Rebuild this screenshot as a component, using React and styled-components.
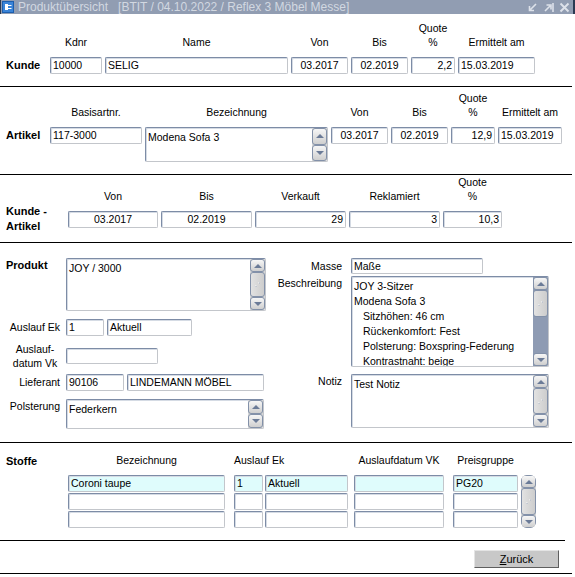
import React from 'react';
import styled, { createGlobalStyle } from 'styled-components';

const GlobalStyle = createGlobalStyle`
  html, body {
    margin: 0;
    padding: 0;
    background: #fff;
  }
  body {
    font-family: "Liberation Sans", Arial, sans-serif;
    color: #000;
  }
`;

const Window = styled.div`
  width: 575px;
  height: 577px;
  overflow: hidden;
  display: flex;
  flex-direction: column;
  background: #fff;
`;

const TitleBar = styled.div`
  flex: none;
  height: 14px;
  box-sizing: border-box;
  display: flex;
  align-items: center;
  background: #919db2;
  border-left: 1px solid #2c3a52;
  border-right: 2px solid #2c3a52;
  padding: 0 3px 0 1px;
`;

const TitleText = styled.div`
  flex: 1;
  margin-left: 4px;
  color: #d2d8e1;
  font-size: 12px;
  line-height: 14px;
  white-space: pre;
`;

const WinButtons = styled.div`
  display: flex;
  gap: 5px;
  align-items: center;
`;

const Section = styled.section`
  flex: none;
  box-sizing: border-box;
  width: ${p => p.$line || 572}px;
  padding: ${p => p.$pad};
  border-bottom: 1px solid #000;
`;

const FieldGrid = styled.div`
  display: grid;
  grid-template-columns: ${p => p.$cols};
  column-gap: 3px;
  row-gap: ${p => p.$rowGap}px;
  align-items: ${p => p.$items || 'start'};
`;

const ColHead = styled.div`
  align-self: ${p => p.$self || 'end'};
  grid-column: ${p => p.$col || 'auto'};
  text-align: ${p => p.$align || 'center'};
  font-size: 10.5px;
  line-height: 14px;
  white-space: nowrap;
`;

const RowLabel = styled.div`
  font-weight: bold;
  font-size: 11px;
  line-height: ${p => p.$lh || 17}px;
  white-space: nowrap;
`;

const Field = styled.div`
  box-sizing: border-box;
  grid-column: ${p => p.$col || 'auto'};
  width: ${p => (p.$w ? `${p.$w}px` : 'auto')};
  height: ${p => p.$h || 17}px;
  border: 1px solid;
  border-color: #7d8ca6 #c3c6cb #c3c6cb #7d8ca6;
  border-radius: 2px;
  box-shadow: inset 1px 1px 0 #d5dbe4;
  background: ${p => p.$bg || '#fff'};
  padding: 0 2px;
  font-size: 10.5px;
  line-height: ${p => (p.$h || 17) - 2}px;
  text-align: ${p => p.$align || 'left'};
  white-space: nowrap;
  overflow: hidden;
`;

const Memo = styled.div`
  box-sizing: border-box;
  display: flex;
  width: ${p => (p.$w ? `${p.$w}px` : 'auto')};
  height: ${p => p.$h}px;
  border: 1px solid;
  border-color: #7d8ca6 #c3c6cb #c3c6cb #7d8ca6;
  border-radius: 2px;
  box-shadow: inset 1px 1px 0 #d5dbe4;
  background: #fff;
  overflow: hidden;
`;

const MemoText = styled.div`
  flex: 1;
  min-width: 0;
  padding: 2px 2px 0;
  font-size: 10.5px;
  line-height: 15px;
  overflow: hidden;
  white-space: nowrap;
`;

const MemoLine = styled.div`
  padding-left: ${p => (p.$indent ? 9 : 0)}px;
`;

const ScrollTrack = styled.div`
  flex: none;
  box-sizing: border-box;
  width: 15px;
  height: ${p => (p.$h ? `${p.$h}px` : 'auto')};
  grid-column: ${p => p.$col || 'auto'};
  grid-row: ${p => p.$row || 'auto'};
  display: flex;
  flex-direction: column;
  background: ${p => (p.$track ? '#8e9bb3' : '#d6d6d6')};
  border-radius: ${p => (p.$round ? 6 : 0)}px;
  overflow: hidden;
`;

const ScrollBtn = styled.div`
  flex: ${p => (p.$fill ? '1' : 'none')};
  box-sizing: border-box;
  height: ${p => (p.$fill ? 'auto' : '13px')};
  border: 1px solid #8391a9;
  border-radius: 3px;
  background: linear-gradient(#f6f6f6, #cfcfcf);
  display: flex;
  align-items: center;
  justify-content: center;
`;

const Arrow = styled.span`
  width: 0;
  height: 0;
  border-left: 4px solid transparent;
  border-right: 4px solid transparent;
  ${p =>
    p.$down
      ? 'border-top: 4px solid #6b7b97;'
      : 'border-bottom: 4px solid #6b7b97;'}
`;

const Thumb = styled.div`
  flex: ${p => (p.$h ? 'none' : '1')};
  box-sizing: border-box;
  height: ${p => (p.$h ? `${p.$h}px` : 'auto')};
  border: 1px solid #8391a9;
  border-radius: 3px;
  background: linear-gradient(90deg, #e2e2e2, #cdcdcd);
  display: flex;
  align-items: center;
  justify-content: center;
`;

const TrackFill = styled.div`
  flex: 1;
`;

const Columns = styled.div`
  display: flex;
  align-items: flex-start;
`;

const Stack = styled.div`
  display: flex;
  flex-direction: column;
  margin-left: ${p => p.$ml || 0}px;
`;

const FormRow = styled.div`
  display: flex;
  align-items: ${p => (p.$top ? 'flex-start' : 'center')};
  gap: 3px;
  margin-top: ${p => p.$mt || 0}px;
`;

const FieldLabel = styled.div`
  flex: none;
  box-sizing: border-box;
  width: ${p => p.$w}px;
  margin-right: ${p => p.$gap}px;
  padding-left: ${p => p.$pl || 0}px;
  text-align: ${p => p.$align || 'right'};
  font-size: ${p => (p.$bold ? 11 : 10.5)}px;
  font-weight: ${p => (p.$bold ? 'bold' : 'normal')};
  line-height: ${p => p.$lh || 15}px;
  white-space: nowrap;
`;

const StoffeRow = styled.div`
  display: flex;
  align-items: flex-start;
`;

const StoffeLabel = styled.div`
  flex: none;
  width: 62px;
  margin-top: 1px;
  font-weight: bold;
  font-size: 11px;
  line-height: 15px;
`;

const StoffeGrid = styled.div`
  display: grid;
  grid-template-columns: 157px 9px 29px 2px 83px 6px 90px 9px 65px 3px 15px;
  grid-template-rows: 21px 17px 17px 17px;
  row-gap: 1px;
`;

const Footer = styled.div`
  flex: none;
  box-sizing: border-box;
  width: 572px;
  display: flex;
  justify-content: flex-end;
  padding: 9px 13px 5px 0;
  border-bottom: 1px solid #000;
`;

const Button = styled.button`
  width: 85px;
  height: 18px;
  padding: 0;
  background: #c8c8c8;
  border: 1px solid;
  border-color: #e4e4e4 #5f5f5f #5f5f5f #e4e4e4;
  font-family: "Liberation Sans", Arial, sans-serif;
  font-size: 11px;
  color: #000;

  u {
    text-decoration: underline;
  }
`;

const Grip = () => (
  <svg width="7" height="7" viewBox="0 0 7 7">
    <rect x="4.5" y="1" width="1.5" height="1.5" fill="#fafafa" />
    <rect x="1" y="4.5" width="1.5" height="1.5" fill="#fafafa" />
    <rect x="5" y="1.5" width="1" height="1" fill="#9aa4b6" />
    <rect x="1.5" y="5" width="1" height="1" fill="#9aa4b6" />
  </svg>
);

// thumb: px height, true = fills, undefined = only two buttons
function Scrollbar({ thumb, track, h, round, col, row }) {
  if (thumb === undefined) {
    return (
      <ScrollTrack $h={h} $round={round} $col={col} $row={row}>
        <ScrollBtn $fill><Arrow /></ScrollBtn>
        <ScrollBtn $fill><Arrow $down /></ScrollBtn>
      </ScrollTrack>
    );
  }
  return (
    <ScrollTrack $track={track} $h={h} $round={round} $col={col} $row={row}>
      <ScrollBtn><Arrow /></ScrollBtn>
      <Thumb $h={thumb === true ? 0 : thumb}><Grip /></Thumb>
      {track && <TrackFill />}
      <ScrollBtn><Arrow $down /></ScrollBtn>
    </ScrollTrack>
  );
}

const AppIcon = () => (
  <svg width="12" height="12" viewBox="0 0 12 12">
    <rect x="0.5" y="0.5" width="11" height="11" fill="#3a84d8" stroke="#1c5eae" />
    <rect x="3" y="3" width="3" height="6" fill="#fff" />
    <path d="M6 4.5 H9.5 M6 7.5 H9.5" stroke="#fff" strokeWidth="1.2" />
  </svg>
);

const WinGlyph = ({ kind }) => (
  <svg width="11" height="11" viewBox="0 0 11 11" fill="none" stroke="#dde2ea" strokeWidth="1.6">
    {kind === 'min' && <path d="M9 2 L3 8 M2.5 4 V8.5 H7" />}
    {kind === 'max' && <path d="M2 9 L7 4 M3.5 3 H8 V7.5 M10 1 V10" />}
    {kind === 'close' && <path d="M1.5 1.5 L9.5 9.5 M9.5 1.5 L1.5 9.5" strokeWidth="1.9" />}
  </svg>
);

const beschreibung = [
  ['JOY 3-Sitzer', false],
  ['Modena Sofa 3', false],
  ['Sitzhöhen: 46 cm', true],
  ['Rückenkomfort: Fest', true],
  ['Polsterung: Boxspring-Federung', true],
  ['Kontrastnaht: beige', true],
];

const stoffe = [
  { bez: 'Coroni taupe', ek: '1', ekText: 'Aktuell', datum: '', pg: 'PG20', active: true },
  { bez: '', ek: '', ekText: '', datum: '', pg: '' },
  { bez: '', ek: '', ekText: '', datum: '', pg: '' },
];

export default function App() {
  return (
    <Window>
      <GlobalStyle />
      <TitleBar>
        <AppIcon />
        <TitleText>Produktübersicht   [BTIT / 04.10.2022 / Reflex 3 Möbel Messe]</TitleText>
        <WinButtons>
          <WinGlyph kind="min" />
          <WinGlyph kind="max" />
          <WinGlyph kind="close" />
        </WinButtons>
      </TitleBar>

      <Section $pad="7px 0 12px 6px">
        <FieldGrid $cols="41px 52px 183px 57px 57px 44px 77px" $rowGap={8}>
          <span />
          <ColHead>Kdnr</ColHead>
          <ColHead>Name</ColHead>
          <ColHead>Von</ColHead>
          <ColHead>Bis</ColHead>
          <ColHead>Quote<br />%</ColHead>
          <ColHead>Ermittelt am</ColHead>
          <RowLabel>Kunde</RowLabel>
          <Field>10000</Field>
          <Field>SELIG</Field>
          <Field $align="center">03.2017</Field>
          <Field $align="center">02.2019</Field>
          <Field $align="right">2,2</Field>
          <Field>15.03.2019</Field>
        </FieldGrid>
      </Section>

      <Section $pad="4px 0 12px 6px">
        <FieldGrid $cols="41px 92px 183px 57px 57px 44px 64px" $rowGap={8}>
          <span />
          <ColHead>Basisartnr.</ColHead>
          <ColHead>Bezeichnung</ColHead>
          <ColHead>Von</ColHead>
          <ColHead>Bis</ColHead>
          <ColHead>Quote<br />%</ColHead>
          <ColHead>Ermittelt am</ColHead>
          <RowLabel>Artikel</RowLabel>
          <Field>117-3000</Field>
          <Memo $h={35}>
            <MemoText>Modena Sofa 3</MemoText>
            <Scrollbar />
          </Memo>
          <Field $align="center">03.2017</Field>
          <Field $align="center">02.2019</Field>
          <Field $align="right">12,9</Field>
          <Field>15.03.2019</Field>
        </FieldGrid>
      </Section>

      <Section $pad="0 0 8px 6px">
        <FieldGrid $cols="59px 90px 91px 91px 91px 59px" $rowGap={1} $items="center">
          <span />
          <ColHead>Von</ColHead>
          <ColHead>Bis</ColHead>
          <ColHead>Verkauft</ColHead>
          <ColHead>Reklamiert</ColHead>
          <ColHead>Quote<br />%</ColHead>
          <RowLabel $lh={15}>Kunde -<br />Artikel</RowLabel>
          <Field $align="center">03.2017</Field>
          <Field $align="center">02.2019</Field>
          <Field $align="right">29</Field>
          <Field $align="right">3</Field>
          <Field $align="right">10,3</Field>
        </FieldGrid>
      </Section>

      <Section $pad="15px 0 13px 6px">
        <Columns>
          <Stack>
            <FormRow $top>
              <FieldLabel $w={54} $gap={3} $align="left" $bold>Produkt</FieldLabel>
              <Memo $w={200} $h={53}>
                <MemoText>JOY / 3000</MemoText>
                <Scrollbar thumb />
              </Memo>
            </FormRow>
            <FormRow $mt={8}>
              <FieldLabel $w={54} $gap={3}>Auslauf Ek</FieldLabel>
              <Field $w={38}>1</Field>
              <Field $w={85}>Aktuell</Field>
            </FormRow>
            <FormRow $mt={6}>
              <FieldLabel $w={54} $gap={3} $align="center" $pl={4} $lh={14}>
                Auslauf-<br />datum Vk
              </FieldLabel>
              <Field $w={92} $h={16} />
            </FormRow>
            <FormRow $mt={4}>
              <FieldLabel $w={54} $gap={3}>Lieferant</FieldLabel>
              <Field $w={58}>90106</Field>
              <Field $w={137}>LINDEMANN MÖBEL</Field>
            </FormRow>
            <FormRow $top $mt={8}>
              <FieldLabel $w={54} $gap={3}>Polsterung</FieldLabel>
              <Memo $w={198} $h={30}>
                <MemoText>Federkern</MemoText>
                <Scrollbar />
              </Memo>
            </FormRow>
          </Stack>

          <Stack $ml={4}>
            <FormRow>
              <FieldLabel $w={72} $gap={6}>Masse</FieldLabel>
              <Field $w={132} $h={16}>Maße</Field>
            </FormRow>
            <FormRow $top $mt={2}>
              <FieldLabel $w={72} $gap={6}>Beschreibung</FieldLabel>
              <Memo $w={198} $h={91}>
                <MemoText>
                  {beschreibung.map(([text, indent]) => (
                    <MemoLine key={text} $indent={indent}>{text}</MemoLine>
                  ))}
                </MemoText>
                <Scrollbar thumb={27} track />
              </Memo>
            </FormRow>
            <FormRow $top $mt={7}>
              <FieldLabel $w={72} $gap={6}>Notiz</FieldLabel>
              <Memo $w={198} $h={54}>
                <MemoText>Test Notiz</MemoText>
                <Scrollbar thumb />
              </Memo>
            </FormRow>
          </Stack>
        </Columns>
      </Section>

      <Section $pad="10px 0 12px 6px" $line={565}>
        <StoffeRow>
          <StoffeLabel>Stoffe</StoffeLabel>
          <StoffeGrid>
            <ColHead $col="1" $self="start">Bezeichnung</ColHead>
            <ColHead $col="3 / 6" $self="start" $align="left">Auslauf Ek</ColHead>
            <ColHead $col="7" $self="start">Auslaufdatum VK</ColHead>
            <ColHead $col="9" $self="start">Preisgruppe</ColHead>
            {stoffe.map((s, i) => {
              const bg = s.active ? '#dffcfc' : '#fff';
              return (
                <React.Fragment key={i}>
                  <Field $col="1" $bg={bg}>{s.bez}</Field>
                  <Field $col="3" $bg={bg}>{s.ek}</Field>
                  <Field $col="5" $bg={bg}>{s.ekText}</Field>
                  <Field $col="7" $bg={bg}>{s.datum}</Field>
                  <Field $col="9" $bg={bg}>{s.pg}</Field>
                </React.Fragment>
              );
            })}
            <Scrollbar thumb round col="11" row="2 / 5" />
          </StoffeGrid>
        </StoffeRow>
      </Section>

      <Footer>
        <Button type="button"><u>Z</u>urück</Button>
      </Footer>
    </Window>
  );
}
